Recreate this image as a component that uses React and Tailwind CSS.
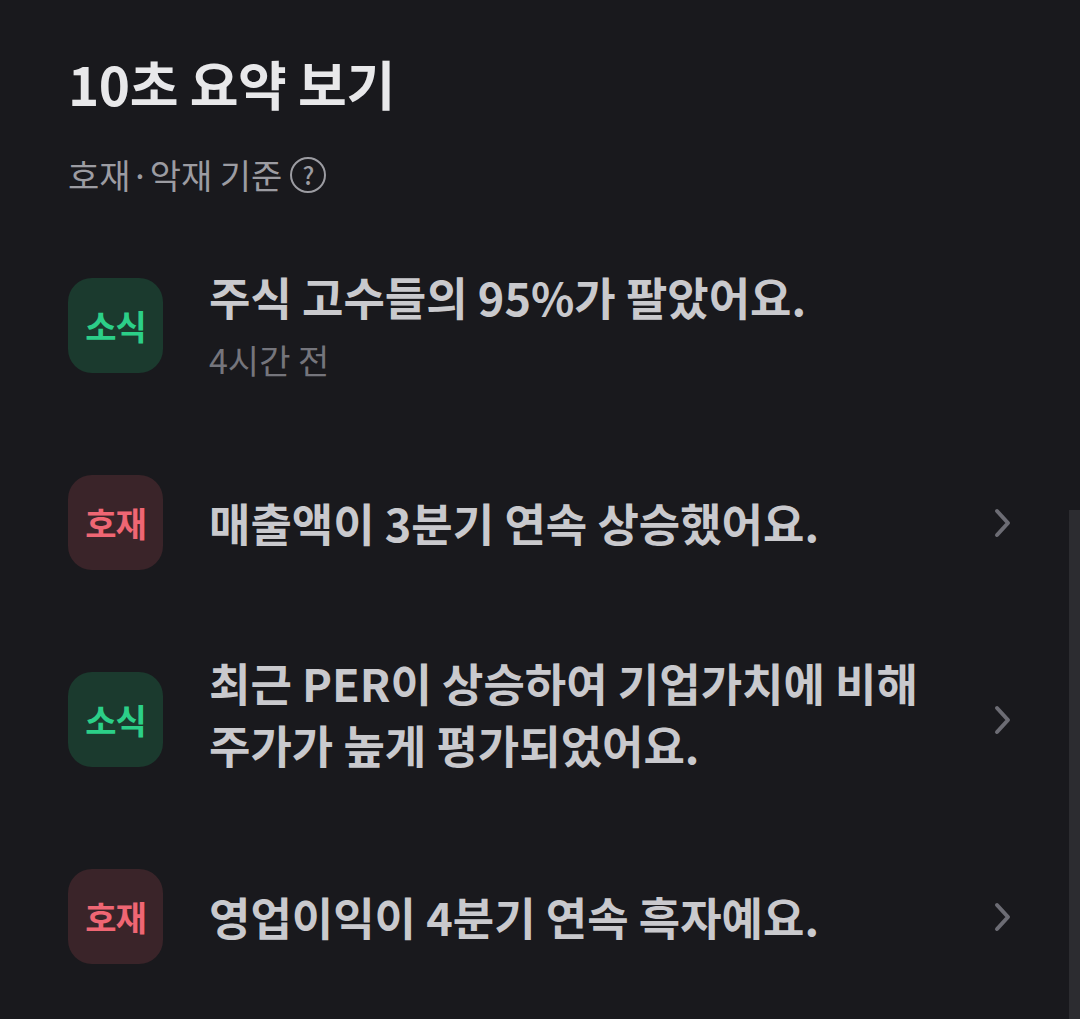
import React from "react";

const FONT = { fontFamily: '"Noto Sans CJK KR", "Noto Sans", sans-serif' };

function Badge({ type }) {
  if (type === "news") {
    return (
      <div className="w-[95px] h-[95px] shrink-0 rounded-[24px] bg-[#1b3a2e] flex items-center justify-center">
        <span className="text-[34px] font-bold text-[#2ccf88] tracking-[-1px]">소식</span>
      </div>
    );
  }
  return (
    <div className="w-[95px] h-[95px] shrink-0 rounded-[24px] bg-[#3a2429] flex items-center justify-center">
      <span className="text-[34px] font-bold text-[#ef6673] tracking-[-1px]">호재</span>
    </div>
  );
}

function Chevron() {
  return (
    <svg width="22" height="34" viewBox="0 0 22 34" className="shrink-0">
      <path d="M5 5 L16 17 L5 29" fill="none" stroke="#6c6c74" strokeWidth="4" strokeLinecap="round" strokeLinejoin="round" />
    </svg>
  );
}

function Row({ type, lines, sub, chevron }) {
  const multi = lines.length > 1;
  return (
    <div className="flex items-center h-[95px]">
      <Badge type={type} />
      <div className={`ml-[46px] flex-1 flex flex-col ${multi ? "mb-[12px]" : ""}`}>
        {lines.map((l, i) => (
          <div key={i} className={`text-[45px] font-semibold text-[#c9c9cd] ${sub ? "leading-[50px]" : "leading-[62px]"}`}>
            {l}
          </div>
        ))}
        {sub && <div className="text-[34px] text-[#75757c] leading-[40px] mt-[18px]">{sub}</div>}
      </div>
      {chevron && <div className="mr-[66px]"><Chevron /></div>}
    </div>
  );
}

export default function App() {
  return (
    <div style={FONT} className="relative w-[1080px] h-[1019px] overflow-hidden bg-[#19191d]">
      <div className="pl-[68px] pt-[51px]">
        <h1 className="text-[53px] font-bold text-[#e8e8ea] leading-[64px] tracking-[-0.4px]">10초 요약 보기</h1>
        <div className="mt-[40px] flex items-center text-[34px] text-[#9c9ca2] leading-[40px]">
          <span>호재·악재 기준</span>
          <span className="ml-[8px] w-[36px] h-[36px] rounded-full border-[2.5px] border-[#9c9ca2] flex items-center justify-center text-[24px] font-medium leading-none">?</span>
        </div>
        <div className="mt-[83px] flex flex-col gap-[102px]">
          <Row type="news" lines={["주식 고수들의 95%가 팔았어요."]} sub="4시간 전" />
          <Row type="good" lines={["매출액이 3분기 연속 상승했어요."]} chevron />
          <Row type="news" lines={["최근 PER이 상승하여 기업가치에 비해", "주가가 높게 평가되었어요."]} chevron />
          <Row type="good" lines={["영업이익이 4분기 연속 흑자예요."]} chevron />
        </div>
      </div>
      <div className="absolute right-0 top-[510px] w-[11px] h-[509px] bg-[#2c2c30]" />
    </div>
  );
}
